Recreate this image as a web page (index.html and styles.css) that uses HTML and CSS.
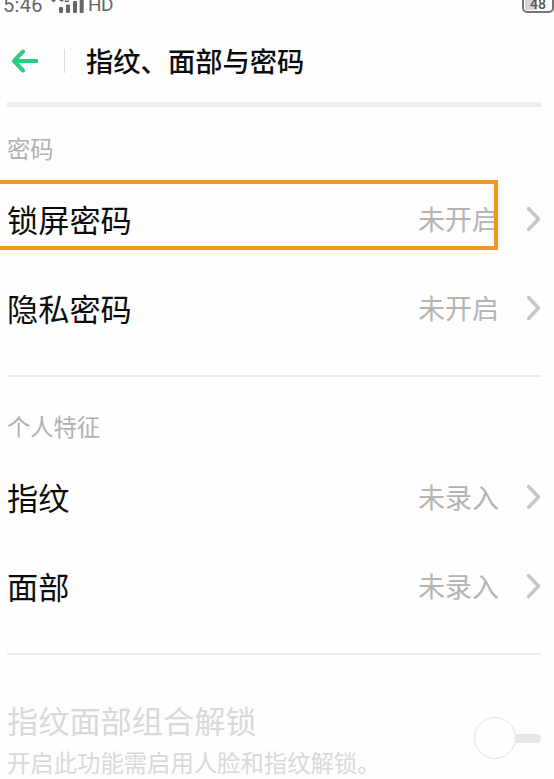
FILE: index.html
```html
<!DOCTYPE html>
<html lang="zh-Hans">
<head>
  <meta charset="UTF-8">
  <meta name="viewport" content="width=device-width, initial-scale=1.0">
  <title>指纹、面部与密码</title>
  <link rel="stylesheet" href="styles.css">
</head>
<body>
  <div class="status-bar">
    <span class="time">5:46</span>
    <svg class="signal" width="36" height="14" viewBox="0 0 36 14">
      <path d="M1 0h5l-2.500 2.500z"/>
      <path d="M9.500 0h4v1h-1v1h-1.200v-1h-1.800zM15 0h1.200v1h1.500v-1h1.200v2h-3.900z"/>
      <rect x="9" y="7" width="4" height="6" rx="1"/>
      <rect x="16" y="4.500" width="4" height="8.500" rx="1"/>
      <rect x="23" y="1" width="4" height="12" rx="1"/>
      <rect x="29.700" y="-3" width="4" height="16" rx="1"/>
    </svg>
    <span class="network">HD</span>
    <span class="battery">48</span>
  </div>

  <header>
    <svg class="back" width="28" height="24" viewBox="0 0 28 24">
      <path d="M13 2.500L4 12l9 9.500M4 12h23"/>
    </svg>
    <span class="separator"></span>
    <h1>指纹、面部与密码</h1>
  </header>

  <section class="first">
    <h2>密码</h2>
    <div class="row">
      <span class="name">锁屏密码</span>
      <span class="value">未开启</span>
      <svg class="arrow" width="15" height="26" viewBox="0 0 15 26"><path d="M2.500 2.500L12.500 13L2.500 23.500"/></svg>
      <div class="highlight"></div>
    </div>
    <div class="row">
      <span class="name">隐私密码</span>
      <span class="value">未开启</span>
      <svg class="arrow" width="15" height="26" viewBox="0 0 15 26"><path d="M2.500 2.500L12.500 13L2.500 23.500"/></svg>
    </div>
  </section>

  <section>
    <h2>个人特征</h2>
    <div class="row">
      <span class="name">指纹</span>
      <span class="value">未录入</span>
      <svg class="arrow" width="15" height="26" viewBox="0 0 15 26"><path d="M2.500 2.500L12.500 13L2.500 23.500"/></svg>
    </div>
    <div class="row">
      <span class="name">面部</span>
      <span class="value">未录入</span>
      <svg class="arrow" width="15" height="26" viewBox="0 0 15 26"><path d="M2.500 2.500L12.500 13L2.500 23.500"/></svg>
    </div>
  </section>

  <div class="combo">
    <div class="combo-text">
      <p class="combo-title">指纹面部组合解锁</p>
      <p class="combo-desc">开启此功能需启用人脸和指纹解锁。</p>
    </div>
    <div class="toggle">
      <span class="knob"></span>
      <span class="track"></span>
    </div>
  </div>
</body>
</html>
```

FILE: styles.css
```css
* {
  margin: 0;
  padding: 0;
  box-sizing: border-box;
}

body {
  height: 779px;
  overflow: hidden;
  background: #fefefe;
  color: #0c0c0c;
  font-family: 'Noto Sans CJK SC', sans-serif;
}

/* status bar */
.status-bar {
  display: flex;
  align-items: flex-start;
  height: 20px;
  padding-left: 3px;
  color: #666;
  font-family: Roboto, sans-serif;
  font-size: 20px;
  line-height: 24px;
}

.time,
.network {
  margin-top: -7px;
}

.time {
  width: 47px;
  letter-spacing: 0.3px;
}

.signal {
  fill: #666;
}

.network {
  margin-left: 2px;
  font-size: 19px;
  letter-spacing: -0.5px;
}

.battery {
  width: 32px;
  height: 21px;
  margin: -8px 0 0 auto;
  border: 2px solid #777;
  border-radius: 5px;
  background: linear-gradient(90deg, #d5d5d5 45%, #fefefe 45%);
  box-shadow: inset 0 0 0 1px #fefefe;
  color: #555;
  font-size: 14px;
  font-weight: 500;
  line-height: 21px;
  text-align: center;
}

/* title bar */
header {
  display: flex;
  align-items: center;
  height: 87px;
  margin: 0 13px 0 7px;
  padding-left: 3px;
  border-bottom: 5px solid #ededed;
}

.back {
  fill: none;
  stroke: #2dcb82;
  stroke-width: 4;
  stroke-linecap: round;
  stroke-linejoin: round;
}

.separator {
  width: 1px;
  height: 24px;
  margin: 0 21px 0 26px;
  background: #dcdcdc;
}

h1 {
  padding-bottom: 2px;
  font-size: 27.300px;
  font-weight: 500;
  line-height: 40px;
}

/* setting groups */
section {
  margin: 0 13px 0 7px;
  padding: 24px 0 23px;
  border-bottom: 2px solid #ebebeb;
}

section.first {
  padding-top: 16px;
}

h2 {
  margin-bottom: 1px;
  color: #b0b0b0;
  font-size: 23.300px;
  font-weight: 400;
  line-height: 50px;
}

.row {
  position: relative;
  display: flex;
  align-items: center;
  height: 89px;
}

.name {
  flex: 1;
  font-size: 31.200px;
}

.value {
  margin-right: 27px;
  color: #b4b4b4;
  font-size: 27px;
}

.arrow {
  fill: none;
  stroke: #c6c6c6;
  stroke-width: 3.500;
  stroke-linecap: round;
  stroke-linejoin: round;
}

.highlight {
  position: absolute;
  top: 6px;
  left: -12px;
  width: 503px;
  height: 70px;
  border: 4px solid #ef981f;
}

/* disabled option */
.combo {
  display: flex;
  justify-content: space-between;
  margin: 0 13px 0 7px;
  padding-top: 42px;
  color: #d8d8d8;
}

.combo-title {
  font-size: 31.200px;
  line-height: 46px;
}

.combo-desc {
  font-size: 23.350px;
  line-height: 38px;
}

.toggle {
  display: flex;
  align-items: center;
  height: 42px;
  margin-top: 20px;
}

.knob {
  width: 42px;
  height: 42px;
  border: 1.500px solid #e2e2e2;
  border-radius: 50%;
}

.track {
  width: 25px;
  height: 9px;
  border-radius: 0 5px 5px 0;
  background: #e6e6e6;
}
```
